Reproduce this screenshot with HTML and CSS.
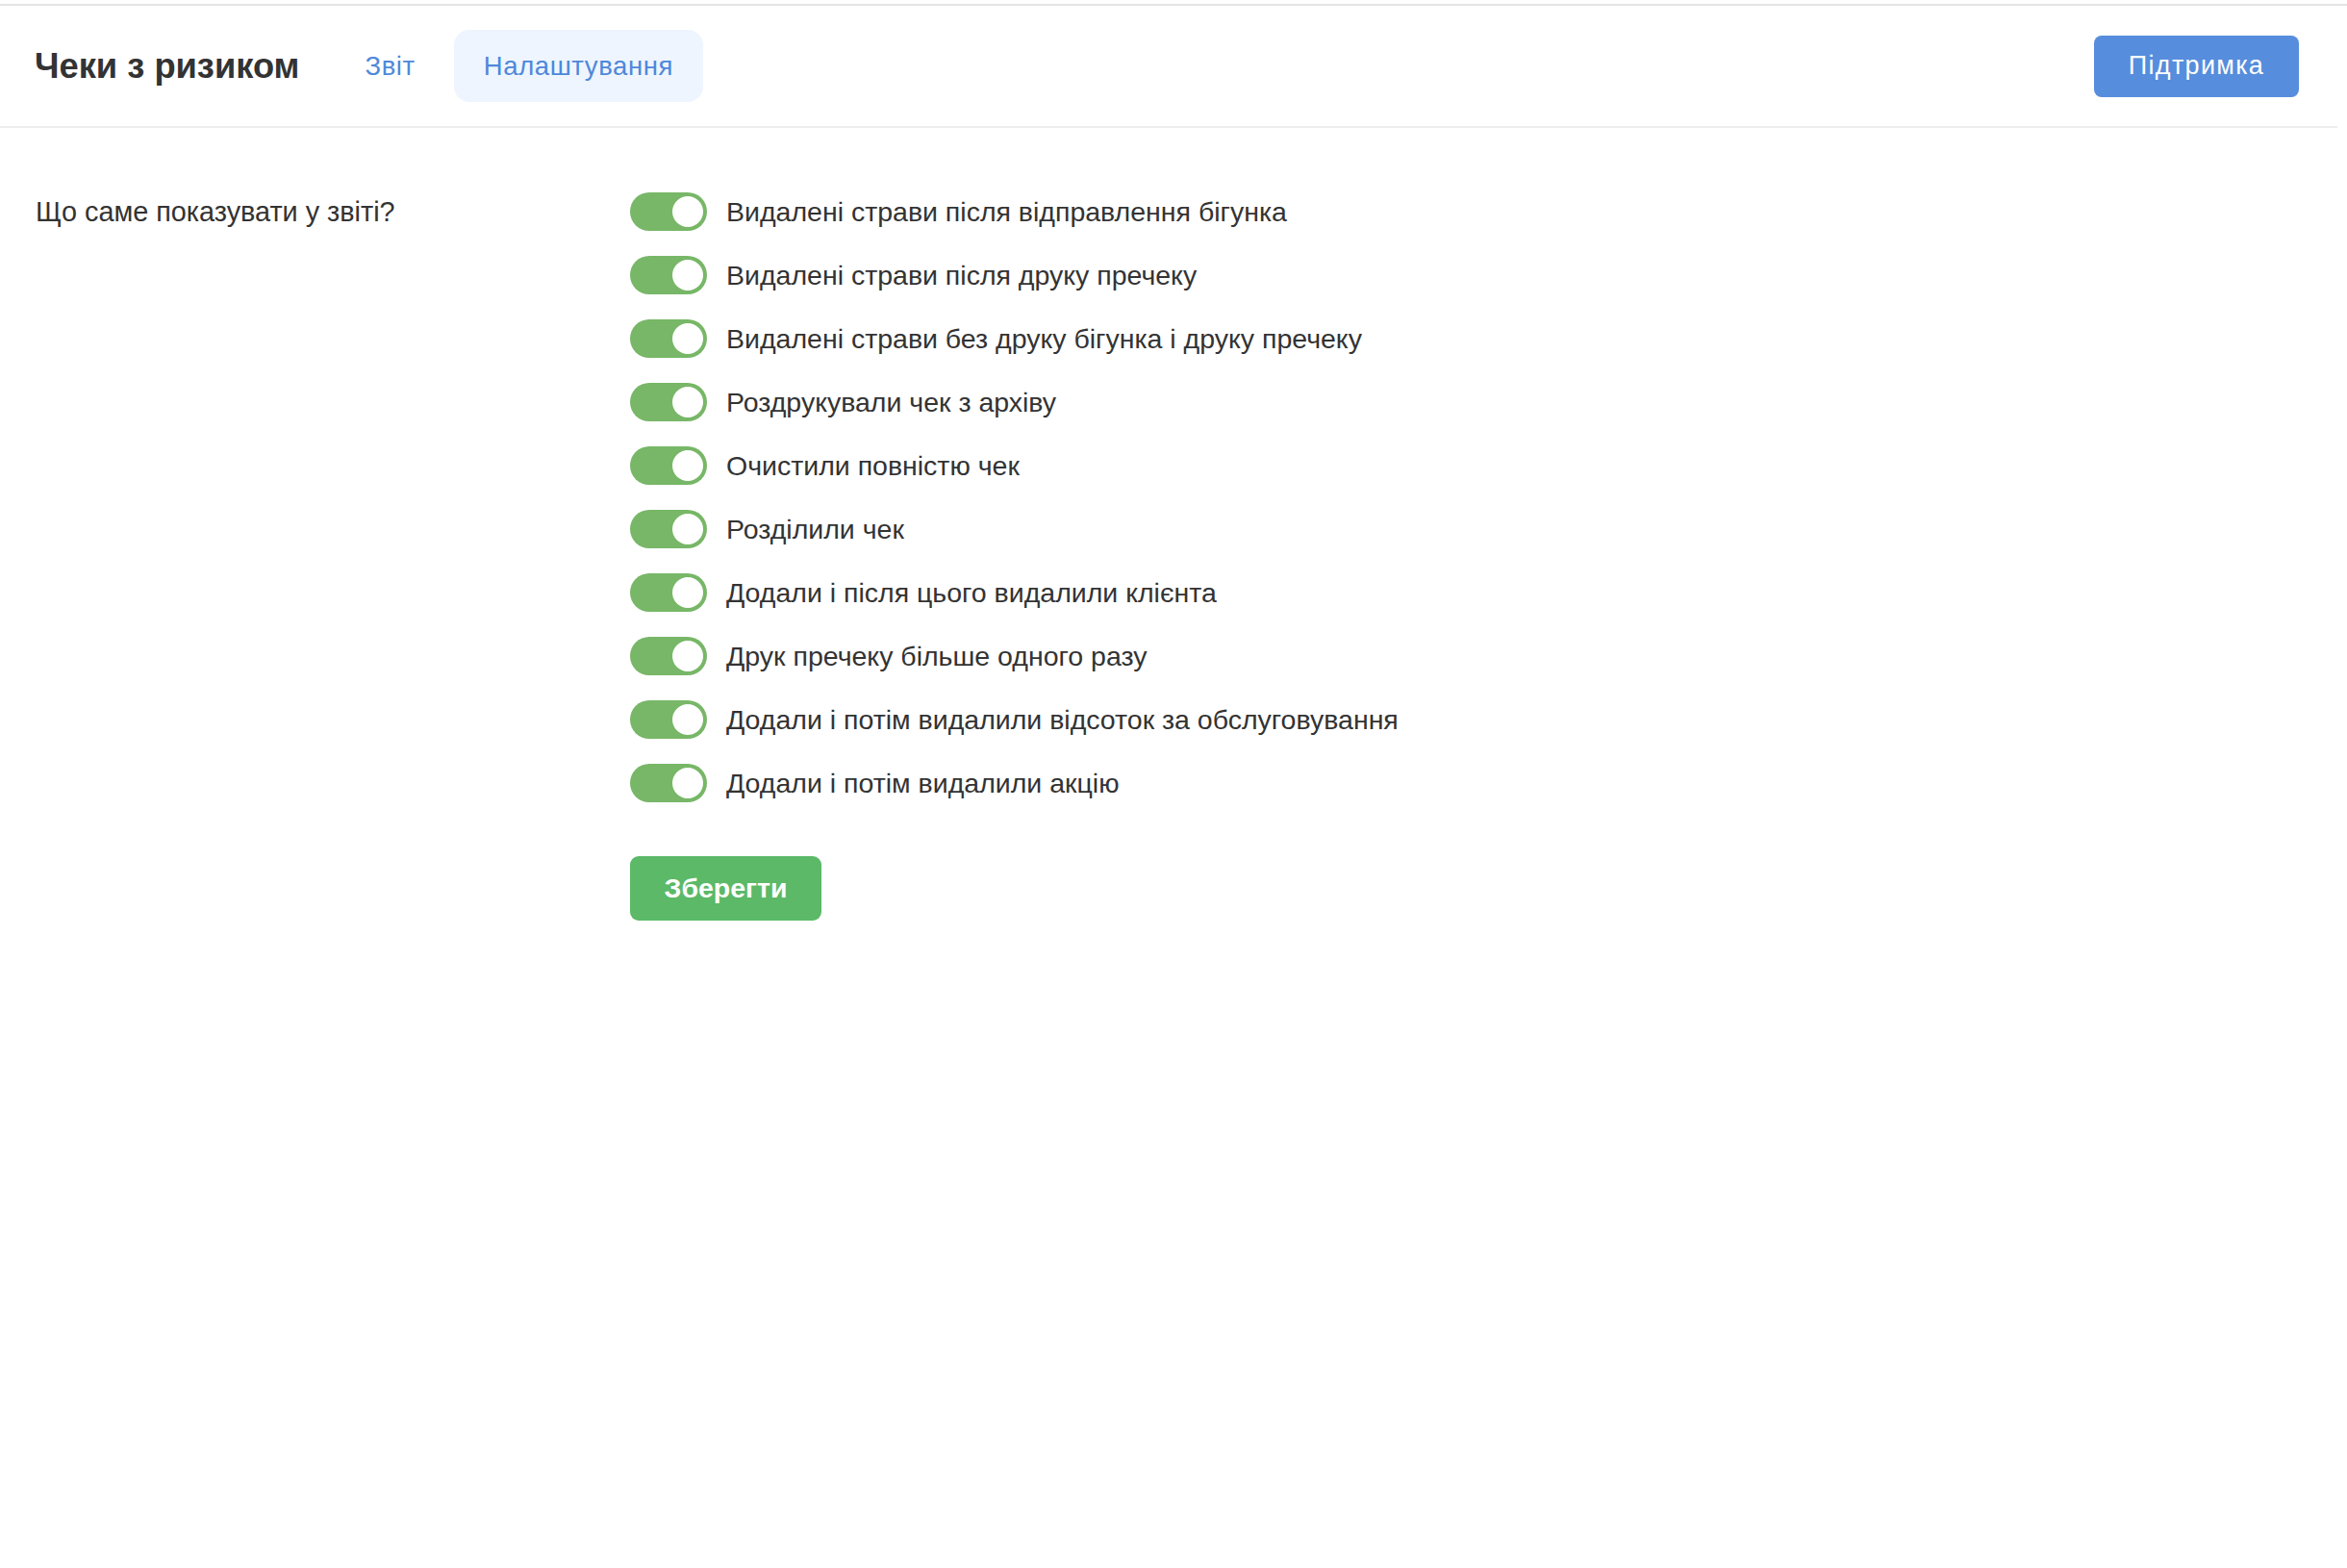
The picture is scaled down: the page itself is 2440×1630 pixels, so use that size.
FILE: index.html
```html
<!DOCTYPE html>
<html lang="uk">
<head>
    <meta charset="UTF-8">
    <meta name="viewport" content="width=device-width, initial-scale=1.0">
    <title>Чеки з ризиком</title>
    <link rel="stylesheet" href="styles.css">
</head>
<body>
    <div class="app">
        <header class="header">
            <h1 class="title">Чеки з ризиком</h1>
            <nav class="tabs">
                <a class="tab" href="#">Звіт</a>
                <a class="tab active" href="#">Налаштування</a>
            </nav>
            <button class="support-btn" type="button">Підтримка</button>
        </header>

        <form class="settings" id="settingsForm">
            <div class="settings-label">Що саме показувати у звіті?</div>
            <div class="settings-options">
                <label class="option">
                    <input type="checkbox" checked>
                    <span class="switch"></span>
                    <span class="option-text">Видалені страви після відправлення бігунка</span>
                </label>
                <label class="option">
                    <input type="checkbox" checked>
                    <span class="switch"></span>
                    <span class="option-text">Видалені страви після друку пречеку</span>
                </label>
                <label class="option">
                    <input type="checkbox" checked>
                    <span class="switch"></span>
                    <span class="option-text">Видалені страви без друку бігунка і друку пречеку</span>
                </label>
                <label class="option">
                    <input type="checkbox" checked>
                    <span class="switch"></span>
                    <span class="option-text">Роздрукували чек з архіву</span>
                </label>
                <label class="option">
                    <input type="checkbox" checked>
                    <span class="switch"></span>
                    <span class="option-text">Очистили повністю чек</span>
                </label>
                <label class="option">
                    <input type="checkbox" checked>
                    <span class="switch"></span>
                    <span class="option-text">Розділили чек</span>
                </label>
                <label class="option">
                    <input type="checkbox" checked>
                    <span class="switch"></span>
                    <span class="option-text">Додали і після цього видалили клієнта</span>
                </label>
                <label class="option">
                    <input type="checkbox" checked>
                    <span class="switch"></span>
                    <span class="option-text">Друк пречеку більше одного разу</span>
                </label>
                <label class="option">
                    <input type="checkbox" checked>
                    <span class="switch"></span>
                    <span class="option-text">Додали і потім видалили відсоток за обслуговування</span>
                </label>
                <label class="option">
                    <input type="checkbox" checked>
                    <span class="switch"></span>
                    <span class="option-text">Додали і потім видалили акцію</span>
                </label>

                <button class="save-btn" type="submit">Зберегти</button>
            </div>
        </form>
    </div>
</body>
</html>
```

FILE: styles.css
```css
body {
    margin: 0;
    padding-top: 4px;
    font-family: "Liberation Sans", Arial, sans-serif;
    color: #333;
    background: #fff;
}
.app {
    border-top: 2px solid #e4e4e4;
    min-height: 1620px;
}
.header {
    display: flex;
    align-items: center;
    height: 125px;
    margin-right: 10px;
    padding: 0 40px 0 36px;
    border-bottom: 2px solid #eeeeee;
}
.title {
    margin: 0;
    font-size: 36.3px;
    font-weight: 700;
    color: #333;
}
.tabs {
    display: flex;
    margin-left: 37px;
    gap: 9px;
}
.tab {
    display: block;
    padding: 0 31px;
    height: 75px;
    line-height: 75px;
    border-radius: 16px;
    font-size: 27.5px;
    color: #4f88da;
    text-decoration: none;
    letter-spacing: 0.6px;
}
.tab.active {
    background-color: #eef5fe;
}
.support-btn {
    margin-left: auto;
    width: 213px;
    height: 64px;
    border: none;
    border-radius: 8px;
    background-color: #578ddd;
    color: #fff;
    font-family: inherit;
    font-size: 27px;
    letter-spacing: 1.3px;
    cursor: pointer;
}
.settings {
    display: flex;
    padding: 67px 0 0 37px;
}
.settings-label {
    width: 618px;
    font-size: 28.8px;
    line-height: 40px;
}
.settings-options {
    display: flex;
    flex-direction: column;
    align-items: flex-start;
    gap: 26px;
}
.option {
    display: flex;
    align-items: center;
    height: 40px;
    cursor: pointer;
}
.option input {
    display: none;
}
.switch {
    position: relative;
    width: 80px;
    height: 40px;
    border-radius: 20px;
    background-color: #ccc;
}
.switch::after {
    content: "";
    position: absolute;
    top: 4px;
    left: 4px;
    width: 32px;
    height: 32px;
    border-radius: 50%;
    background: #fff;
}
.option input:checked + .switch {
    background-color: #77b767;
}
.option input:checked + .switch::after {
    left: 44px;
}
.option-text {
    margin-left: 20px;
    font-size: 28.5px;
}
.save-btn {
    margin-top: 30px;
    width: 199px;
    height: 67px;
    border: none;
    border-radius: 9px;
    background-color: #5bb967;
    color: #fff;
    font-family: inherit;
    font-size: 28.5px;
    font-weight: 700;
    cursor: pointer;
}
```
